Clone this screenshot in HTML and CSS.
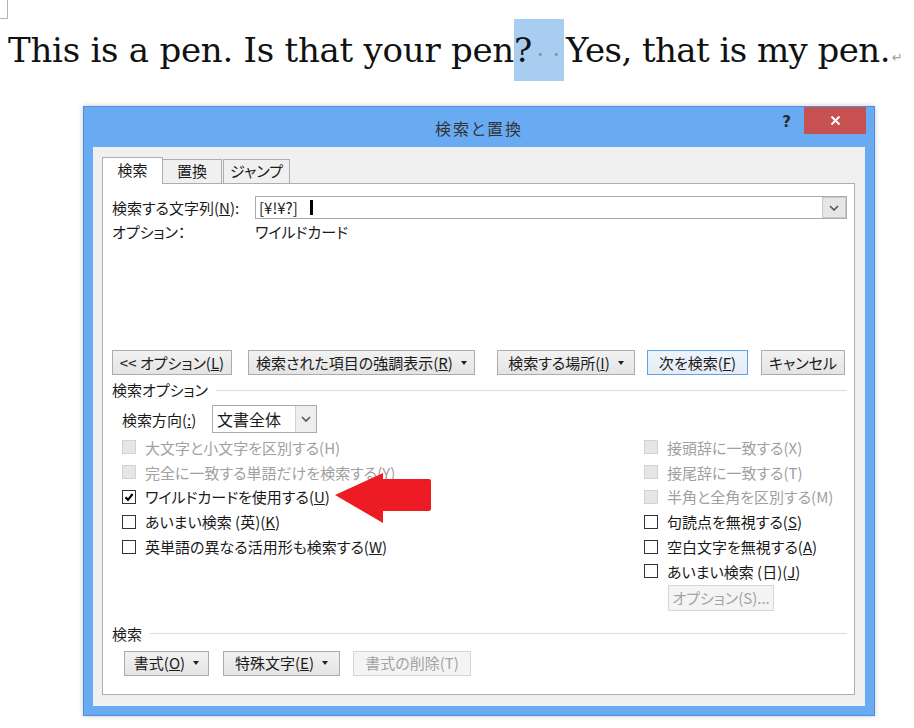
FILE: index.html
```html
<!DOCTYPE html>
<html lang="ja">
<head>
<meta charset="utf-8">
<title>検索と置換</title>
<link rel="stylesheet" href="styles.css">
</head>
<body>
<div class="page">
  <div class="corner"></div>
  <p class="doc"><span class="seg-a">This is a pen. Is that your pen</span><span class="hl">?<span class="dot">·</span><span class="dot">·</span></span><span class="seg-b">Yes, that is my pen.</span><span class="ret">↵</span></p>

  <div class="dialog">
    <div class="titlebar">
      <span class="title">検索と置換</span>
      <div class="controls">
        <span class="help">?</span>
        <span class="close"><svg width="11" height="11" viewBox="0 0 11 11"><path d="M1.5 1.5 L9.5 9.5 M9.5 1.5 L1.5 9.5" stroke="#fff" stroke-width="2" fill="none"/></svg></span>
      </div>
    </div>
    <div class="client">
      <div class="tabs">
        <div class="tab tab-sel">検索</div>
        <div class="tab tab-2">置換</div>
        <div class="tab tab-3">ジャンプ</div>
      </div>
      <div class="panel">
        <div class="search-row">
          <span class="lbl">検索する文字列(<u>N</u>):</span>
          <div class="combo">
            <span class="combo-text">[¥!¥?]<span class="caret"></span></span>
            <span class="combo-btn"><svg width="10" height="6" viewBox="0 0 10 6"><path d="M1 1 L5 5 L9 1" stroke="#555" stroke-width="1.6" fill="none"/></svg></span>
          </div>
        </div>
        <div class="opt-row">
          <span class="lbl">オプション：</span>
          <span>ワイルドカード</span>
        </div>

        <div class="btn-row">
          <span class="btn b-opt">&lt;&lt; オプション(<u>L</u>)</span>
          <span class="btn b-hl">検索された項目の強調表示(<u>R</u>)<i class="tri"></i></span>
          <span class="btn b-place">検索する場所(<u>I</u>)<i class="tri"></i></span>
          <span class="btn btn-default b-next">次を検索(<u>F</u>)</span>
          <span class="btn b-cancel">キャンセル</span>
        </div>

        <div class="section">
          <span>検索オプション</span><span class="rule"></span>
        </div>

        <div class="dir-row">
          <span class="dir-lbl">検索方向(<u>:</u>)</span>
          <div class="select">
            <span class="select-text">文書全体</span>
            <span class="select-btn"><svg width="10" height="6" viewBox="0 0 10 6"><path d="M1 1 L5 5 L9 1" stroke="#555" stroke-width="1.6" fill="none"/></svg></span>
          </div>
        </div>

        <div class="opts">
          <div class="col">
            <div class="cb dis"><span class="box"></span>大文字と小文字を区別する(H)</div>
            <div class="cb dis"><span class="box"></span>完全に一致する単語だけを検索する(Y)</div>
            <div class="cb"><span class="box"><svg width="10" height="10" viewBox="0 0 10 10"><path d="M1.5 5.2 L4 7.8 L8.6 2" stroke="#000" stroke-width="2.1" fill="none"/></svg></span>ワイルドカードを使用する(<u>U</u>)</div>
            <div class="cb"><span class="box"></span>あいまい検索 (英)(<u>K</u>)</div>
            <div class="cb"><span class="box"></span>英単語の異なる活用形も検索する(<u>W</u>)</div>
          </div>
          <div class="col">
            <div class="cb dis"><span class="box"></span>接頭辞に一致する(X)</div>
            <div class="cb dis"><span class="box"></span>接尾辞に一致する(T)</div>
            <div class="cb dis"><span class="box"></span>半角と全角を区別する(M)</div>
            <div class="cb"><span class="box"></span>句読点を無視する(<u>S</u>)</div>
            <div class="cb"><span class="box"></span>空白文字を無視する(<u>A</u>)</div>
            <div class="cb"><span class="box"></span>あいまい検索 (日)(<u>J</u>)</div>
            <span class="btn btn-dis b-jopt">オプション(S)...</span>
          </div>
        </div>

        <div class="section section-2">
          <span>検索</span><span class="rule"></span>
        </div>

        <div class="btn-row2">
          <span class="btn b-fmt">書式(<u>O</u>)<i class="tri"></i></span>
          <span class="btn b-spec">特殊文字(<u>E</u>)<i class="tri"></i></span>
          <span class="btn btn-dis b-clear">書式の削除(T)</span>
        </div>
      </div>
    </div>
  </div>

  <svg class="arrow" width="98" height="52" viewBox="0 0 98 52"><path d="M0 22 L48 0 L48 6 L94 6 Q96 6 96 8 L96 36 Q96 38 94 38 L48 38 L48 50 Z" fill="#ed1c24"/></svg>
</div>
</body>
</html>
```

FILE: styles.css
```css
* { box-sizing: border-box; }

body {
  margin: 0;
  background: #fff;
  font-family: "Noto Sans CJK JP", "Noto Sans", sans-serif;
  font-feature-settings: "palt";
  color: #1a1a1a;
}

.page {
  position: relative;
  width: 914px;
  height: 728px;
  overflow: hidden;
}

.corner {
  width: 8px;
  height: 19px;
  border-right: 1px solid #b4b4b4;
  border-bottom: 1px solid #b4b4b4;
}

.doc {
  margin: 0 0 0 8px;
  height: 62px;
  font-family: "DejaVu Serif", "Liberation Serif", serif;
  font-feature-settings: normal;
  font-size: 34px;
  line-height: 62px;
  color: #111;
  white-space: nowrap;
}

.seg-a { letter-spacing: -0.25px; }
.seg-b { letter-spacing: -0.55px; margin-left: 2px; }

.hl {
  display: inline-block;
  width: 50px;
  height: 62px;
  background: #a9cdf0;
}

.dot {
  display: inline-block;
  width: 16px;
  text-align: center;
  color: #8c8c8c;
  font-size: 22px;
}

.ret {
  font-family: "DejaVu Sans", sans-serif;
  font-size: 13px;
  color: #9a9a9a;
  margin-left: 2px;
}

/* dialog */
.dialog {
  margin: 25px 0 0 83px;
  width: 792px;
  height: 610px;
  background: #68abf3;
  border: 1px solid #4f8fdb;
  box-shadow: 0 0 5px rgba(0, 0, 0, 0.22);
  display: flex;
  flex-direction: column;
}

.titlebar {
  height: 40px;
  display: grid;
  grid-template-columns: 1fr auto 1fr;
}

.title {
  grid-column: 2;
  align-self: center;
  font-size: 16px;
  letter-spacing: 2px;
  color: #333;
  padding-top: 2px;
}

.controls {
  grid-column: 3;
  justify-self: end;
  display: flex;
  align-items: flex-start;
  margin-right: 8px;
}

.help {
  flex: none;
  font-family: "DejaVu Sans", sans-serif;
  font-weight: bold;
  font-size: 15px;
  line-height: 20px;
  padding-top: 5px;
  color: #2a2a2a;
  margin-right: 13px;
}

.close {
  flex: none;
  width: 62px;
  height: 27px;
  background: #c75050;
  display: flex;
  align-items: center;
  justify-content: center;
}

.client {
  flex: 1;
  margin: 0 9px 9px;
  background: #f0f0f0;
  padding: 10px 0 0 9px;
}

/* tabs */
.tabs {
  display: flex;
  align-items: flex-end;
  height: 26px;
}

.tab {
  height: 24px;
  border: 1px solid #adadad;
  border-bottom: none;
  background: #f0f0f0;
  font-size: 15px;
  line-height: 22px;
  text-align: center;
}

.tab-sel {
  position: relative;
  z-index: 1;
  width: 61px;
  height: 27px;
  margin-bottom: -1px;
  background: #fff;
  line-height: 24px;
}

.tab-2 { width: 60px; margin-left: -1px; }
.tab-3 { width: 67px; margin-left: 1px; }

.panel {
  width: 753px;
  height: 512px;
  border: 1px solid #adadad;
  background: #fff;
  padding: 12px 7px 0 9px;
  font-size: 15px;
}

.lbl {
  display: inline-block;
  width: 143px;
  flex: none;
}

.search-row {
  display: flex;
  align-items: center;
  height: 23px;
}

.combo {
  width: 592px;
  height: 23px;
  border: 1px solid #ababab;
  display: flex;
  align-items: stretch;
}

.combo-text {
  flex: 1;
  padding-left: 3px;
  line-height: 21px;
  display: flex;
  align-items: center;
}

.caret {
  display: inline-block;
  width: 3px;
  height: 15px;
  background: #000;
  margin-left: 12px;
}

.combo-btn {
  width: 24px;
  background: #e6e6e6;
  border: 1px solid #c9c9c9;
  display: flex;
  align-items: center;
  justify-content: center;
}

.opt-row {
  display: flex;
  margin-top: 5px;
  height: 16px;
  line-height: 16px;
}

/* buttons */
.btn {
  display: inline-flex;
  align-items: center;
  justify-content: center;
  height: 25px;
  border: 1px solid #acacac;
  background: linear-gradient(#f2f2f2, #e4e4e4);
  font-size: 15px;
  line-height: 20px;
  white-space: nowrap;
  flex: none;
}

.btn-default {
  border-color: #5ea2ea;
  background: linear-gradient(#eef4fb, #e6ecf3);
}

.btn-dis {
  border-color: #d6d6d6;
  background: #f4f4f4;
  color: #a3a3a3;
}

.tri {
  display: inline-block;
  width: 0;
  height: 0;
  border-left: 3.5px solid transparent;
  border-right: 3.5px solid transparent;
  border-top: 4px solid #222;
  margin-left: 8px;
}

.btn-row {
  display: flex;
  margin-top: 110px;
}

.b-opt { width: 120px; }
.b-hl { width: 227px; margin-left: 16px; }
.b-place { width: 138px; margin-left: 22px; }
.b-next { width: 101px; margin-left: 12px; }
.b-cancel { width: 84px; margin-left: 13px; }

.section {
  display: flex;
  align-items: center;
  height: 16px;
  line-height: 16px;
  margin-top: 7px;
}

.section-2 { margin-top: 15px; }

.rule {
  flex: 1;
  border-top: 1px solid #dcdcdc;
  margin-left: 8px;
}

.dir-row {
  display: flex;
  align-items: center;
  margin-top: 7px;
  padding-left: 10px;
  height: 28px;
}

.dir-lbl { width: 90px; }

.select {
  width: 105px;
  height: 28px;
  border: 1px solid #ababab;
  display: flex;
}

.select-text {
  flex: 1;
  padding-left: 4px;
  line-height: 26px;
  font-size: 16px;
}

.select-btn {
  width: 21px;
  border-left: 1px solid #d0d0d0;
  background: #eeeeee;
  display: flex;
  align-items: center;
  justify-content: center;
}

.opts {
  display: grid;
  grid-template-columns: 522px 1fr;
  margin-top: 2px;
  padding-left: 10px;
}

.col {
  display: flex;
  flex-direction: column;
  align-items: flex-start;
}

.cb {
  display: flex;
  align-items: center;
  height: 24.8px;
  white-space: nowrap;
}

.box {
  width: 14px;
  height: 14px;
  border: 1px solid #333;
  background: #fff;
  margin-right: 9px;
  display: flex;
  align-items: center;
  justify-content: center;
}

.cb.dis { color: #a0a0a0; }
.cb.dis .box {
  border-color: #d2d2d2;
  background: #e6e6e6;
}

.b-jopt {
  width: 106px;
  height: 26px;
  margin: 1px 0 0 24px;
}

.btn-row2 {
  display: flex;
  margin-top: 9px;
  padding-left: 12px;
}

.b-fmt { width: 85px; }
.b-spec { width: 117px; margin-left: 14px; }
.b-clear { width: 118px; margin-left: 13px; }

.arrow {
  position: absolute;
  left: 335px;
  top: 473px;
}
```
